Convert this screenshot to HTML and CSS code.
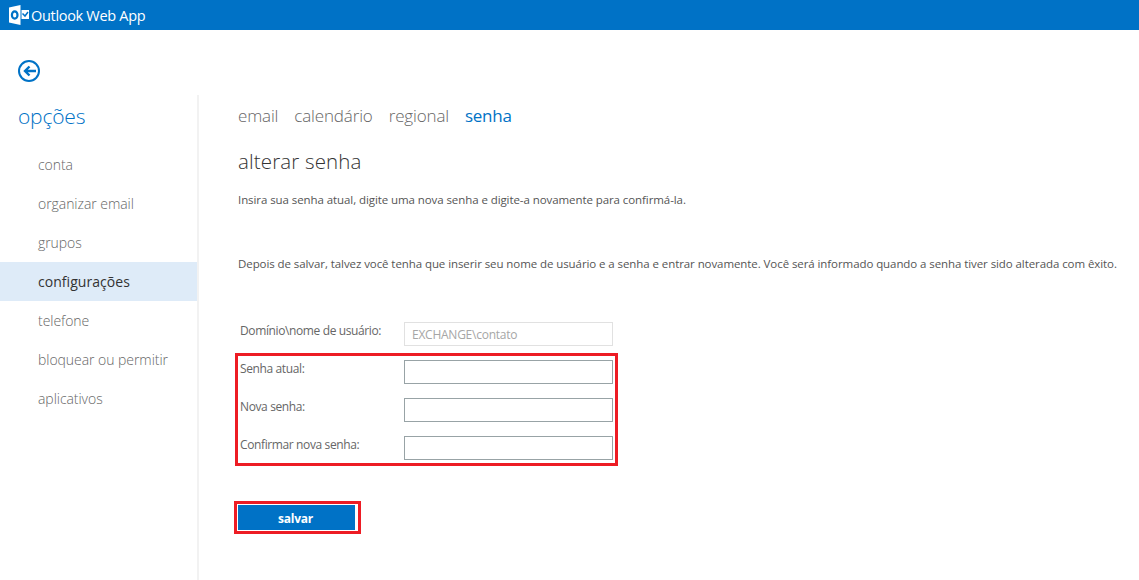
FILE: index.html
```html
<!DOCTYPE html>
<html lang="pt">
<head>
<meta charset="utf-8">
<title>Outlook Web App</title>
<link rel="stylesheet" href="styles.css">
</head>
<body>
<header class="topbar">
  <svg class="logo" width="20" height="20" viewBox="0 0 20 20">
    <path fill="#fff" d="M0 2.500 11.500 0v20L0 17.500z"/>
    <path fill="#fff" d="M12.500 5H20v9h-7.500z"/>
    <path fill="none" stroke="#0072c6" stroke-width="1.500" d="M13.500 8.500l2.500 2.500 3-4"/>
    <ellipse cx="5.700" cy="10" rx="2.800" ry="3.600" fill="none" stroke="#0072c6" stroke-width="2.200"/>
  </svg>
  <span class="brand">Outlook Web App</span>
</header>
<div class="back-row">
  <svg class="back" width="24" height="24" viewBox="0 0 24 24">
    <circle cx="12" cy="12" r="10" fill="none" stroke="#0072c6" stroke-width="2"/>
    <path fill="none" stroke="#0072c6" stroke-width="2.400" d="M19 12H8M12.500 7.500 8 12l4.500 4.500"/>
  </svg>
</div>
<div class="layout">
  <aside class="sidebar">
    <h1 class="side-title">opções</h1>
    <nav class="side-nav">
      <a class="side-item">conta</a>
      <a class="side-item">organizar email</a>
      <a class="side-item">grupos</a>
      <a class="side-item side-item-active">configurações</a>
      <a class="side-item">telefone</a>
      <a class="side-item">bloquear ou permitir</a>
      <a class="side-item">aplicativos</a>
    </nav>
  </aside>
  <main class="content">
    <nav class="tabs">
      <a class="tab">email</a>
      <a class="tab">calendário</a>
      <a class="tab">regional</a>
      <a class="tab tab-active">senha</a>
    </nav>
    <h2 class="page-title">alterar senha</h2>
    <p class="intro">Insira sua senha atual, digite uma nova senha e digite-a novamente para confirmá-la.</p>
    <p class="note">Depois de salvar, talvez você tenha que inserir seu nome de usuário e a senha e entrar novamente. Você será informado quando a senha tiver sido alterada com êxito.</p>
    <div class="row row-domain">
      <label class="label">Domínio\nome de usuário:</label>
      <div class="field field-disabled">EXCHANGE\contato</div>
    </div>
    <div class="redbox">
      <div class="row">
        <label class="label">Senha atual:</label>
        <div class="field"></div>
      </div>
      <div class="row">
        <label class="label">Nova senha:</label>
        <div class="field"></div>
      </div>
      <div class="row">
        <label class="label">Confirmar nova senha:</label>
        <div class="field"></div>
      </div>
    </div>
    <div class="save-frame"><button class="save">salvar</button></div>
  </main>
</div>
</body>
</html>
```

FILE: styles.css
```css
* { box-sizing: border-box; }
html, body { margin: 0; height: 100%; overflow: hidden; }
body { background: #fff; font-family: "Open Sans", "Noto Sans", sans-serif; color: #666; }

.topbar { height: 30px; background: #0072c6; display: flex; align-items: center; padding-left: 9px; gap: 2px; }
.logo { flex: none; }
.brand { color: #fff; font-size: 14.5px; font-weight: 400; letter-spacing: -0.31px; }

.back-row { height: 65px; padding: 29px 0 0 17px; }
.back { display: block; }

.layout { display: flex; height: 485px; }
.sidebar { width: 199px; flex: none; border-right: 2px solid #f2f2f2; }
.side-title { margin: 0; height: 47px; padding-left: 18px; font-size: 21px; line-height: 43px; font-weight: 300; color: #0072c6; letter-spacing: -0.2px; }
.side-nav { display: flex; flex-direction: column; margin-top: 3px; }
.side-item { height: 39px; line-height: 39px; padding-left: 38px; font-size: 14px; font-weight: 300; color: #666; letter-spacing: -0.05px; white-space: nowrap; }
.side-item-active { background: #deebf8; color: #333; font-weight: 400; letter-spacing: 0.05px; }

.content { flex: 1; min-width: 0; padding: 6px 0 0 39px; }
.tabs { display: flex; gap: 16px; height: 28px; align-items: center; }
.tab { font-size: 17px; font-weight: 300; color: #666; letter-spacing: -0.15px; }
.tab-active { color: #0072c6; font-weight: 400; letter-spacing: -0.25px; }
.page-title { margin: 19px 0 0; font-size: 20.5px; line-height: 26px; font-weight: 300; color: #333; letter-spacing: 0.15px; }
.intro, .note { margin: 0; font-size: 11.5px; line-height: 16px; color: #555; letter-spacing: -0.08px; white-space: nowrap; }
.intro { margin-top: 18px; }
.note { margin-top: 48px; }

.row { display: flex; height: 24px; }
.label { width: 166px; padding-left: 2px; font-size: 12px; line-height: 17px; color: #666; letter-spacing: -0.38px; white-space: nowrap; }
.field { width: 209px; height: 24px; border: 1px solid #98a3a6; background: #fff; }
.field-disabled { border-color: #e1e1e1; color: #a6a6a6; font-size: 12px; line-height: 23px; padding-left: 7px; letter-spacing: -0.25px; }
.row-domain { margin-top: 50px; }

.redbox { width: 383px; height: 113px; margin: 7px 0 0 -3px; padding: 4px 0 0 0; border: 3px solid #ed1c24; display: flex; flex-direction: column; gap: 14px; }

.save-frame { width: 127px; height: 33px; margin: 35px 0 0 -4px; border: 3px solid #ed1c24; padding: 1px 3px 1px 1px; }
.save { display: block; width: 100%; height: 100%; padding: 1px 2px 0 0; border: 0; background: #0072c6; color: #fff; font: 700 12px "Open Sans", sans-serif; letter-spacing: -0.25px; }
```
